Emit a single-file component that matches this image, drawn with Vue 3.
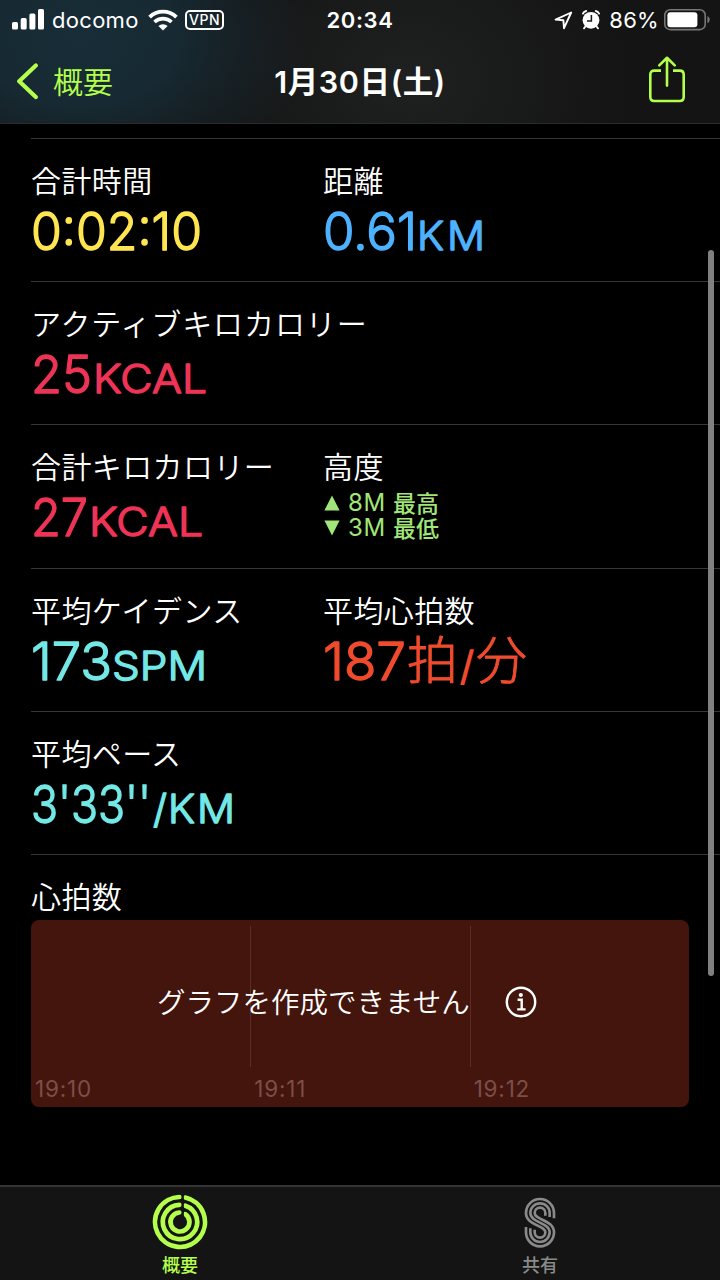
<template>
  <div class="screen">
    <header class="header">
      <div class="status-bar">
        <div class="status-left">
          <svg class="signal" width="32" height="22" viewBox="0 0 32 22" fill="#fff">
            <rect x="0" y="13" width="6" height="7.5" rx="1.6" />
            <rect x="8.7" y="9.1" width="6" height="11.4" rx="1.6" />
            <rect x="17.4" y="4.5" width="6" height="16" rx="1.6" />
            <rect x="26" y="0" width="6" height="20.5" rx="1.6" />
          </svg>
          <span class="carrier">docomo</span>
          <svg class="wifi" width="30" height="22" viewBox="0 0 30 22" fill="none" stroke="#fff" stroke-width="3.7">
            <path d="M1.6 8.1 A19.2 19.2 0 0 1 28.4 8.1" />
            <path d="M6.5 13 A12.2 12.2 0 0 1 23.5 13" />
            <path d="M15 21.6 L10.4 17 A6.6 6.6 0 0 1 19.6 17 Z" fill="#fff" stroke="none" />
          </svg>
          <span class="vpn">VPN</span>
        </div>
        <span class="clock">20:34</span>
        <div class="status-right">
          <svg class="location" width="19" height="19" viewBox="0 0 19 19" fill="none" stroke="#fff" stroke-width="1.9" stroke-linejoin="round">
            <path d="M17.2 1.5 L1.6 8.6 L9.4 9.3 L10 17.2 Z" />
          </svg>
          <svg class="alarm" width="18" height="20" viewBox="0 0 18 20">
            <circle cx="9" cy="10.3" r="8.4" fill="#fff" />
            <path d="M0.9 3.6 Q1.7 1.6 4.2 1 M17.1 3.6 Q16.3 1.6 13.8 1 M3.6 16.3 L2 18.4 M14.4 16.3 L16 18.4" stroke="#fff" stroke-width="1.8" fill="none" stroke-linecap="round" />
            <path d="M9.4 5 V10.9 H5" stroke="#181818" stroke-width="1.5" fill="none" />
          </svg>
          <span class="percent">86%</span>
          <svg class="battery" width="46" height="22" viewBox="0 0 46 22">
            <rect x="0.8" y="0.8" width="40.4" height="19.8" rx="5.4" fill="none" stroke="#777" stroke-width="1.6" />
            <rect x="3.4" y="3.2" width="30" height="15" rx="3" fill="#fff" />
            <path d="M43.4 7 Q45.8 8.2 45.8 10.6 Q45.8 13 43.4 14.2 Z" fill="#777" />
          </svg>
        </div>
      </div>
      <div class="nav-bar">
        <button class="back">
          <svg width="23" height="38" viewBox="0 0 23 38" fill="none" stroke="#b4ff4b" stroke-width="4.2" stroke-linecap="round" stroke-linejoin="round">
            <path d="M19.8 2.4 L3.2 18.2 L19.8 34" />
          </svg>
          <span>概要</span>
        </button>
        <h1>1月30日(土)</h1>
        <button class="share">
          <svg width="38" height="48" viewBox="0 0 38 48" fill="none" stroke="#b4ff4b" stroke-width="2.6" stroke-linecap="round" stroke-linejoin="round">
            <path d="M13 14.6 H6.3 Q2.3 14.6 2.3 18.6 V41 Q2.3 45 6.3 45 H31.7 Q35.7 45 35.7 41 V18.6 Q35.7 14.6 31.7 14.6 H25" stroke-linecap="butt" />
            <path d="M19 29.6 V2.2 M11.3 9.4 L19 1.8 L26.7 9.4" />
          </svg>
        </button>
      </div>
    </header>

    <main class="content">
      <section v-for="(row, i) in rows" :key="i" class="row">
        <div v-for="item in row" :key="item.label" class="metric">
          <div class="label" :class="{ kana: item.kana }">{{ item.label }}</div>
          <div v-if="item.elevation" class="elevation">
            <div v-for="e in item.elevation" :key="e.name" class="elevation-line">
              <svg width="16" height="16" viewBox="0 0 16 16" fill="#a0e678">
                <path :d="e.icon" />
              </svg>
              <span class="meters">{{ e.value }}</span>
              <span class="level">{{ e.name }}</span>
            </div>
          </div>
          <svg v-else class="value" width="300" height="64" :fill="item.color" :stroke="item.color">
            <text
              v-for="part in item.parts"
              :key="part.x"
              :x="part.x"
              y="51"
              :class="part.type"
              :textLength="part.width"
              lengthAdjust="spacingAndGlyphs"
            >{{ part.text }}</text>
          </svg>
        </div>
      </section>

      <section class="heart">
        <div class="label">心拍数</div>
        <div class="chart">
          <div v-for="time in times" :key="time" class="slot">
            <div class="grid-line"></div>
            <span>{{ time }}</span>
          </div>
          <div class="notice">
            <span>グラフを作成できません</span>
            <svg width="32" height="32" viewBox="0 0 32 32" fill="none" stroke="#fff" stroke-width="2.4">
              <circle cx="16" cy="16" r="14.2" />
              <circle cx="15.8" cy="9" r="2.1" fill="#fff" stroke="none" />
              <path d="M12.6 13.8 H16.7 V23.2 M12.2 23.4 H20.6" />
            </svg>
          </div>
        </div>
      </section>
      <div class="scrollbar"></div>
    </main>

    <nav class="tab-bar">
      <div class="tab active">
        <svg width="56" height="56" viewBox="0 0 168 168" fill="none" stroke="#b4ff4b" stroke-width="14" stroke-linecap="round">
          <path d="M82 9 A75 75 0 1 0 100 10.7" />
          <path d="M82 32.5 A51.5 51.5 0 1 0 100 35" />
          <path d="M82 55.5 A28.5 28.5 0 1 0 100 60.4" />
          <path d="M92.5 0 V74" stroke="#141414" stroke-width="6" stroke-linecap="butt" />
        </svg>
        <span>概要</span>
      </div>
      <div class="tab">
        <svg width="56" height="56" viewBox="0 0 168 168" fill="none" stroke="#8a8a8a" stroke-width="8">
          <path d="M126 73 V57 A42 42 0 0 0 42 57 C42 94 100 94 100 115 A16 16 0 0 1 68 115 V107" />
          <path d="M113 69 V57 A29 29 0 0 0 55 57 C55 86 113 86 113 115 A29 29 0 0 1 55 115 V103" />
          <path d="M100 65 V57 A16 16 0 0 0 68 57 C68 78 126 78 126 115 A42 42 0 0 1 42 115 V99" />
        </svg>
        <span>共有</span>
      </div>
    </nav>
  </div>
</template>

<script setup>
// 各行の計測値（x と width は値の表示幅）
const rows = [
  [
    { label: '合計時間', color: '#ffe651', parts: [{ text: '0:02:10', type: 'num', x: 0, width: 171 }] },
    { label: '距離', color: '#4db2ff', parts: [{ text: '0.61', type: 'num', x: 0, width: 94 }, { text: 'K', type: 'unit', x: 94, width: 27 }, { text: 'M', type: 'unit', x: 124, width: 38 }] }
  ],
  [
    { label: 'アクティブキロカロリー', kana: true, color: '#ee3456', parts: [{ text: '25', type: 'num', x: 0, width: 61 }, { text: 'KCAL', type: 'unit', x: 62, width: 114 }] }
  ],
  [
    { label: '合計キロカロリー', color: '#ee3456', parts: [{ text: '27', type: 'num', x: 0, width: 57 }, { text: 'KCAL', type: 'unit', x: 58, width: 114 }] },
    {
      label: '高度',
      elevation: [
        { value: '8M', name: '最高', icon: 'M8 0.4 L15.6 15.4 H0.4 Z' },
        { value: '3M', name: '最低', icon: 'M8 15.6 L15.6 0.6 H0.4 Z' }
      ]
    }
  ],
  [
    { label: '平均ケイデンス', color: '#73e8e6', parts: [{ text: '173', type: 'num', x: 0, width: 81 }, { text: 'SPM', type: 'unit', x: 81, width: 95 }] },
    {
      label: '平均心拍数',
      color: '#f04b2d',
      parts: [
        { text: '187', type: 'num', x: 0, width: 83 },
        { text: '拍', type: 'kanji', x: 84, width: 51 },
        { text: '/', type: 'unit', x: 137, width: 14 },
        { text: '分', type: 'kanji', x: 153, width: 51 }
      ]
    }
  ],
  [
    { label: '平均ペース', color: '#73e8e6', parts: [{ text: "3'33''", type: 'num', x: 0, width: 120 }, { text: '/', type: 'unit', x: 122, width: 14 }, { text: 'K', type: 'unit', x: 137, width: 27 }, { text: 'M', type: 'unit', x: 166, width: 38 }] }
  ]
]

const times = ['19:10', '19:11', '19:12']
</script>

<style>
body {
  margin: 0;
  background: #000;
}
</style>

<style scoped>
.screen {
  width: 720px;
  height: 1280px;
  display: flex;
  flex-direction: column;
  overflow: hidden;
  background: #000;
  color: #fff;
  font-family: Inter, "Noto Sans CJK JP", sans-serif;
}

.header {
  height: 124px;
  box-sizing: border-box;
  border-bottom: 1px solid #292b2c;
  background:
    radial-gradient(ellipse 230px 160px at 80px 38px, #182d38 0%, #172a33 40%, rgba(20, 26, 29, 0) 100%),
    radial-gradient(ellipse 220px 180px at 410px 80px, #1f2020, #141414);
}

.status-bar {
  height: 40px;
  display: grid;
  grid-template-columns: 1fr 80px 1fr;
  align-items: center;
}

.status-left,
.status-right {
  display: flex;
  align-items: center;
}

.status-left {
  padding-left: 12px;
}

.status-left svg {
  flex-shrink: 0;
}

.carrier {
  width: 87px;
  flex-shrink: 0;
  margin-left: 8px;
  font-size: 22px;
  letter-spacing: 0.3px;
}

.wifi {
  margin-left: 9px;
}

.vpn {
  width: 35px;
  height: 16px;
  margin-left: 7px;
  border: 2px solid #fff;
  border-radius: 5px;
  font-size: 14px;
  font-weight: 500;
  line-height: 16px;
  text-align: center;
  letter-spacing: 0.5px;
}

.clock {
  text-align: center;
  font-size: 22px;
  font-weight: 600;
  letter-spacing: 0.6px;
}

.status-right {
  justify-content: flex-end;
  padding-right: 10px;
}

.alarm {
  margin-left: 9px;
}

.percent {
  margin-left: 9px;
  margin-right: 5px;
  font-size: 22px;
  letter-spacing: 0.3px;
}

.nav-bar {
  height: 83px;
  display: grid;
  grid-template-columns: 1fr 240px 1fr;
  align-items: center;
}

button {
  padding: 0;
  border: 0;
  background: none;
  font-family: inherit;
  color: #b4ff4b;
}

.back {
  display: flex;
  align-items: center;
  padding-left: 16px;
  font-size: 30px;
  font-weight: 350;
  line-height: 40px;
}

.back span {
  margin-left: 14px;
}

h1 {
  margin: 0;
  text-align: center;
  font-size: 30.5px;
  font-weight: 600;
  line-height: 40px;
  letter-spacing: 0.6px;
}

.share {
  display: flex;
  justify-self: end;
  margin-right: 34px;
  margin-top: -4px;
}

.content {
  position: relative;
  flex: 1;
  padding: 14px 0 0 31px;
}

.row {
  display: grid;
  grid-template-columns: 292px 1fr;
  height: 143.2px;
  box-sizing: border-box;
  border-top: 1px solid #363636;
  padding-top: 20px;
}

.label {
  height: 40px;
  font-family: "Noto Sans CJK JP", sans-serif;
  font-size: 30px;
  font-weight: 350;
  line-height: 40px;
  letter-spacing: 0.4px;
  white-space: nowrap;
}

.kana {
  letter-spacing: 0.9px;
}

.value {
  display: block;
  overflow: visible;
  stroke-width: 1.4px;
  stroke-linejoin: round;
}

.num {
  font-size: 52px;
  font-weight: 300;
}

.unit {
  font-size: 39.5px;
  font-weight: 300;
}

.kanji {
  font-family: "Noto Sans CJK JP", sans-serif;
  font-size: 51px;
  font-weight: 300;
  stroke-width: 0.9px;
  transform: translateY(-1px);
}

.elevation {
  padding-top: 5px;
  color: #a0e678;
  font-size: 23px;
  font-weight: 500;
  line-height: 25px;
}

.elevation-line {
  display: flex;
  align-items: center;
  height: 25px;
  padding-left: 1px;
}

.meters {
  width: 45px;
  margin-left: 8px;
  font-size: 24px;
  font-weight: 400;
  letter-spacing: 0.7px;
}

.level {
  font-family: "Noto Sans CJK JP", sans-serif;
}

.heart {
  margin-right: 31px;
  border-top: 1px solid #363636;
  padding-top: 20px;
  position: relative;
}

.heart::before {
  content: "";
  position: absolute;
  top: -1px;
  left: 100%;
  width: 31px;
  height: 1px;
  background: #363636;
}

.chart {
  position: relative;
  display: grid;
  grid-template-columns: repeat(3, 1fr);
  height: 187px;
  margin-top: 5px;
  border-radius: 8px;
  background: #44150d;
}

.slot {
  display: flex;
  flex-direction: column;
  padding-top: 6px;
  font-size: 22.5px;
  letter-spacing: 0.8px;
  color: #7c4e48;
}

.slot span {
  margin: 8px 0 0 4px;
}

.grid-line {
  width: 1px;
  height: 141px;
  background: #5c2d26;
}

.slot:first-child .grid-line {
  background: none;
}

/* グラフの上に重ねるメッセージ */
.notice {
  position: absolute;
  top: 61px;
  left: 126px;
  display: flex;
  align-items: center;
  height: 43px;
  font-family: "Noto Sans CJK JP", sans-serif;
  font-size: 28.5px;
  font-weight: 350;
  white-space: nowrap;
}

.notice span {
  margin-top: -4px;
}

.notice svg {
  margin-left: 35px;
}

.scrollbar {
  position: absolute;
  top: 126px;
  right: 6px;
  width: 6px;
  height: 726px;
  border-radius: 3px;
  background: #808080;
}

.tab-bar {
  display: grid;
  grid-template-columns: 1fr 1fr;
  height: 95px;
  box-sizing: border-box;
  border-top: 2px solid #353535;
  background: #141414;
}

.tab {
  display: flex;
  flex-direction: column;
  align-items: center;
  padding-top: 7px;
  color: #8a8a8a;
  font-size: 18px;
  font-weight: 500;
  line-height: 26px;
}

.tab span {
  margin-top: 3px;
}

.active {
  color: #b4ff4b;
}
</style>
